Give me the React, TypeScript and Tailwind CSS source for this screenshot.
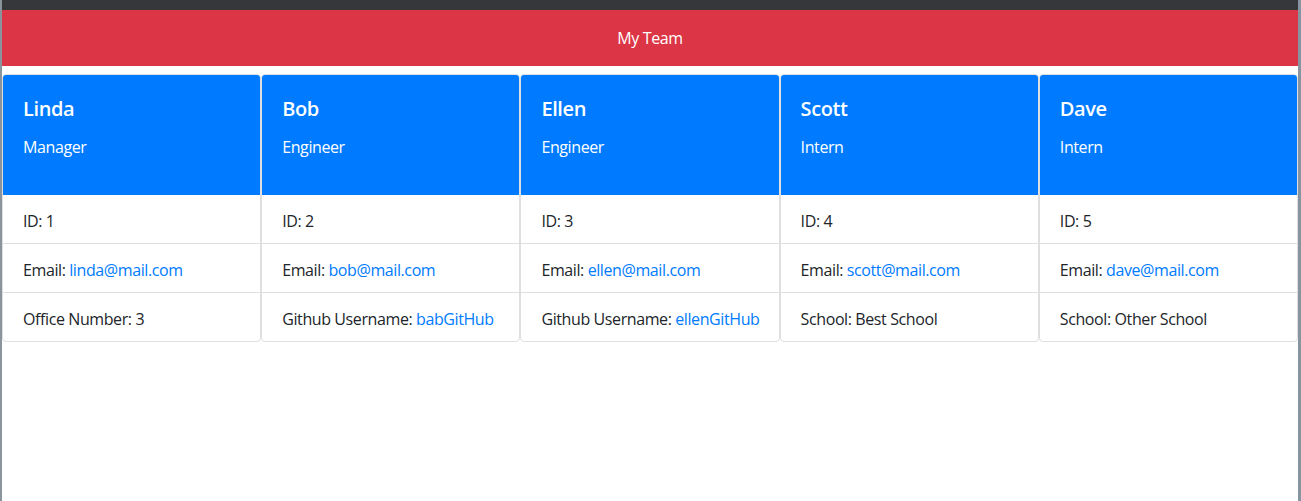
const team = [
  { name: "Linda", role: "Manager", id: 1, email: "linda@mail.com", label: "Office Number:", value: "3", link: false },
  { name: "Bob", role: "Engineer", id: 2, email: "bob@mail.com", label: "Github Username:", value: "babGitHub", link: true },
  { name: "Ellen", role: "Engineer", id: 3, email: "ellen@mail.com", label: "Github Username:", value: "ellenGitHub", link: true },
  { name: "Scott", role: "Intern", id: 4, email: "scott@mail.com", label: "School:", value: "Best School", link: false },
  { name: "Dave", role: "Intern", id: 5, email: "dave@mail.com", label: "School:", value: "Other School", link: false },
];

type Member = (typeof team)[number];

export default function App() {
  return (
    <div className="flex h-[501px] w-[1301px] bg-[#8a949c] font-['Segoe_UI','Open_Sans',sans-serif] tracking-[-0.4px] text-[#212529]">
      <div className="w-[2px] shrink-0" />
      <div className="flex w-[1296px] shrink-0 flex-col bg-white">
        <div className="h-[10px] bg-[#35373b]" />
        {/* header */}
        <header className="flex h-[56px] items-center justify-center bg-[#dc3545] text-base text-white">
          My Team
        </header>
        {/* cards */}
        <div className="mt-[8px] flex">
          {team.map((m) => (
            <Card key={m.id} m={m} />
          ))}
        </div>
      </div>
      <div className="flex-1 bg-[#8795a1]" />
    </div>
  );
}

function Card({ m }: { m: Member }) {
  return (
    <div className="min-w-0 flex-1 overflow-hidden rounded-[4px] border border-[#dfdfdf]">
      <div className="h-[120px] bg-[#007bff] px-5 pt-[22px] text-white">
        <h5 className="text-[20px] leading-6 font-semibold">{m.name}</h5>
        <p className="mt-[14px] text-base leading-6">{m.role}</p>
      </div>
      <ul className="text-base leading-6 whitespace-nowrap">
        <li className="px-5 pt-[14px] pb-[10px]">ID: {m.id}</li>
        <li className="border-t border-[#dfdfdf] px-5 pt-[14px] pb-[10px]">
          Email: <a href="#" className="text-[#007bff]">{m.email}</a>
        </li>
        <li className="border-t border-[#dfdfdf] px-5 pt-[14px] pb-[10px]">
          {m.label}{" "}
          {m.link ? <a href="#" className="text-[#007bff]">{m.value}</a> : m.value}
        </li>
      </ul>
    </div>
  );
}
